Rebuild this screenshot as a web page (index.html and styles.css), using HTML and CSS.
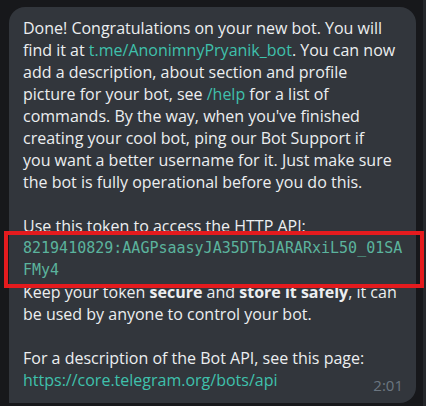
FILE: index.html
```html
<!DOCTYPE html>
<html>
<head>
<meta charset="utf-8">
<link rel="stylesheet" href="styles.css">
</head>
<body>
<div class="screen">
  <div class="chat">
    <div class="bubble">
      <p class="para">Done! Congratulations on your new bot. You will<br>find it at <a class="link">t.me/AnonimnyPryanik_bot</a>. You can now<br>add a description, about section and profile<br>picture for your bot, see <a class="link">/help</a> for a list of<br>commands. By the way, when you've finished<br>creating your cool bot, ping our Bot Support if<br>you want a better username for it. Just make sure<br>the bot is fully operational before you do this.</p>
      <div class="para">
        <div>Use this token to access the HTTP API:</div>
        <div class="token">8219410829:AAGPsaasyJA35DTbJARARxiL50_01SA<br>FMy4</div>
        <div>Keep your token <b>secure</b> and <b>store it safely</b>, it can<br>be used by anyone to control your bot.</div>
      </div>
      <p class="para para-last">For a description of the Bot API, see this page:<br><a class="link">https://core.telegram.org/bots/api</a></p>
      <span class="time">2:01</span>
    </div>
  </div>
  <div class="scrollbar"></div>
</div>
</body>
</html>
```
FILE: styles.css
```css
html, body {
  margin: 0;
  padding: 0;
  background: #17181b;
}
.screen {
  display: flex;
  width: 426px;
  height: 406px;
  overflow: hidden;
}
.chat {
  flex: 1;
  padding: 7px 0 0 9px;
}
.scrollbar {
  width: 3px;
  background: #25272b;
}
.bubble {
  position: relative;
  width: 407px;
  box-sizing: border-box;
  height: 396px;
  background: #32363c;
  border-radius: 16px 16px 16px 0;
  padding: 10px 10px 12px 14px;
  color: #eceef0;
  font-family: "Open Sans", "Noto Sans", sans-serif;
  font-size: 16px;
  line-height: 22px;
}
.para {
  margin: 0 0 22px 0;
  white-space: nowrap;
}
.para-last {
  margin-bottom: 0;
}
.link {
  color: #3fc1ac;
  text-decoration: none;
}
b {
  font-weight: 700;
}
.token {
  position: relative;
  font-family: "DejaVu Sans Mono", monospace;
  font-size: 15px;
  color: #5bb39d;
}
.token::after {
  content: "";
  position: absolute;
  left: -19px;
  top: -6px;
  width: 412px;
  height: 49px;
  border: 4px solid #e41b1e;
}
.time {
  position: absolute;
  right: 13px;
  bottom: 8px;
  font-size: 15px;
  line-height: 20px;
  color: #6c7681;
}
```
